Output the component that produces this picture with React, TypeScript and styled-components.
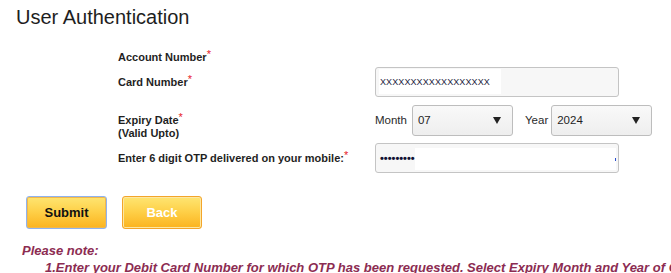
import React from 'react';
import styled, { createGlobalStyle } from 'styled-components';

const GlobalStyle = createGlobalStyle`
    html, body {
        margin: 0;
        padding: 0;
        background: #ffffff;
        font-family: 'Liberation Sans', Arial, sans-serif;
        color: #222222;
    }
`;

const Page = styled.div`
    width: 671px;
    height: 273px;
    overflow: hidden;
`;

const Heading = styled.h1`
    margin: 0;
    padding: 5px 16px 0;
    font-size: 20px;
    line-height: 24px;
    font-weight: normal;
    color: #1e1e1e;
`;

const Form = styled.div`
    display: flex;
    flex-direction: column;
    gap: 8px;
    padding: 20px 0 0 118px;
`;

const Row = styled.div<{ $height: number; $pull?: number }>`
    display: grid;
    grid-template-columns: 257px auto;
    grid-template-rows: ${(p) => p.$height}px;
    align-items: center;
    height: ${(p) => p.$height}px;
    margin-bottom: -${(p) => p.$pull ?? 0}px;
`;

const Label = styled.div<{ $top?: number }>`
    font-size: 11px;
    font-weight: bold;
    line-height: 13px;
    color: #1f1f1f;
    ${(p) =>
        p.$top !== undefined
            ? `align-self: start; margin-top: ${p.$top}px; margin-bottom: -${p.$top}px;`
            : ''}
`;

const Required = styled.sup`
    color: #e8202a;
    font-size: 11px;
    line-height: 0;
    vertical-align: 3px;
    font-weight: normal;
`;

const Field = styled.div<{ $width?: number }>`
    display: flex;
    align-items: center;
    box-sizing: border-box;
    width: ${(p) => p.$width ?? 244}px;
    height: 30px;
    padding: 1px 2px 2px 3px;
    border: 1px solid #c4c4c4;
    border-radius: 3px;
    background: #f7f7f7;
`;

const FieldValue = styled.span`
    display: flex;
    align-items: center;
    align-self: stretch;
    padding: 0 11px 0 1px;
    background: #ffffff;
    font-size: 9px;
    letter-spacing: 0.1px;
    color: #1b1b3c;
`;

const Dots = styled.span`
    display: flex;
    align-items: center;
    align-self: stretch;
    padding: 0 0 0 1px;
    font-size: 11px;
    font-weight: bold;
    color: #111133;
`;

const Filler = styled.span`
    flex: 1;
    align-self: stretch;
    margin: 3px 0 0;
    background: #ffffff;
    position: relative;
`;

const Caret = styled.span`
    position: absolute;
    right: 0;
    top: 10px;
    width: 1px;
    height: 3px;
    background: #2a4fd0;
`;

const SelectGroup = styled.div`
    display: flex;
    align-items: center;
    font-size: 11.5px;
    color: #2a2a2a;
`;

const SelectLabel = styled.span<{ $gap: number }>`
    margin-right: ${(p) => p.$gap}px;
`;

const SelectBox = styled.div<{ $after?: number }>`
    display: flex;
    align-items: center;
    justify-content: space-between;
    box-sizing: border-box;
    width: 101px;
    height: 31px;
    padding: 0 11px 0 5px;
    margin-right: ${(p) => p.$after ?? 0}px;
    border: 1px solid #bdbdbd;
    border-radius: 3px;
    background: linear-gradient(#f9f9f9, #eeeeee);
    font-size: 11.5px;
    color: #1f1f1f;
`;

const Arrow = () => (
    <svg width="8" height="7" viewBox="0 0 8 7">
        <path d="M0 0 H8 L4 7 Z" fill="#222" />
    </svg>
);

const Buttons = styled.div`
    display: flex;
    gap: 15px;
    padding: 23px 0 0 26px;
`;

const Button = styled.button<{ $focused?: boolean }>`
    box-sizing: border-box;
    width: ${(p) => (p.$focused ? 81 : 80)}px;
    height: 33px;
    padding: 0;
    border: 1px solid ${(p) => (p.$focused ? '#8fb3ee' : '#f3a52a')};
    border-radius: 3px;
    box-shadow: inset 0 0 0 1px ${(p) => (p.$focused ? '#f2b84a' : '#fde7a2')};
    background: linear-gradient(#fee572 0%, #fed14a 45%, #fbb31e 100%);
    font-family: 'Liberation Sans', Arial, sans-serif;
    font-size: 13px;
    font-weight: bold;
    color: ${(p) => (p.$focused ? '#111111' : '#ffffff')};
`;

const Note = styled.div`
    padding: 13px 0 0 22px;
    font-size: 13px;
    font-weight: bold;
    font-style: italic;
    line-height: 17px;
    color: #8c2c52;
    white-space: nowrap;
`;

const NoteItem = styled.div`
    padding-left: 23px;
`;

export default function App() {
    return (
        <Page>
            <GlobalStyle />
            <Heading>User Authentication</Heading>
            <Form>
                <Row $height={16} $pull={6}>
                    <Label>
                        Account Number<Required>*</Required>
                    </Label>
                    <span />
                </Row>
                <Row $height={30}>
                    <Label>
                        Card Number<Required>*</Required>
                    </Label>
                    <Field>
                        <FieldValue>XXXXXXXXXXXXXXXXXX</FieldValue>
                    </Field>
                </Row>
                <Row $height={30}>
                    <Label $top={9}>
                        Expiry Date<Required>*</Required>
                        <br />
                        (Valid Upto)
                    </Label>
                    <SelectGroup>
                        <SelectLabel $gap={5}>Month</SelectLabel>
                        <SelectBox $after={12}>
                            <span>07</span>
                            <Arrow />
                        </SelectBox>
                        <SelectLabel $gap={3}>Year</SelectLabel>
                        <SelectBox>
                            <span>2024</span>
                            <Arrow />
                        </SelectBox>
                    </SelectGroup>
                </Row>
                <Row $height={30}>
                    <Label>
                        Enter 6 digit OTP delivered on your mobile:<Required>*</Required>
                    </Label>
                    <Field>
                        <Dots>•••••••••</Dots>
                        <Filler>
                            <Caret />
                        </Filler>
                    </Field>
                </Row>
            </Form>
            <Buttons>
                <Button $focused>Submit</Button>
                <Button>Back</Button>
            </Buttons>
            <Note>
                Please note:
                <NoteItem>
                    1.Enter your Debit Card Number for which OTP has been requested. Select Expiry Month and Year of Card
                </NoteItem>
            </Note>
        </Page>
    );
}
